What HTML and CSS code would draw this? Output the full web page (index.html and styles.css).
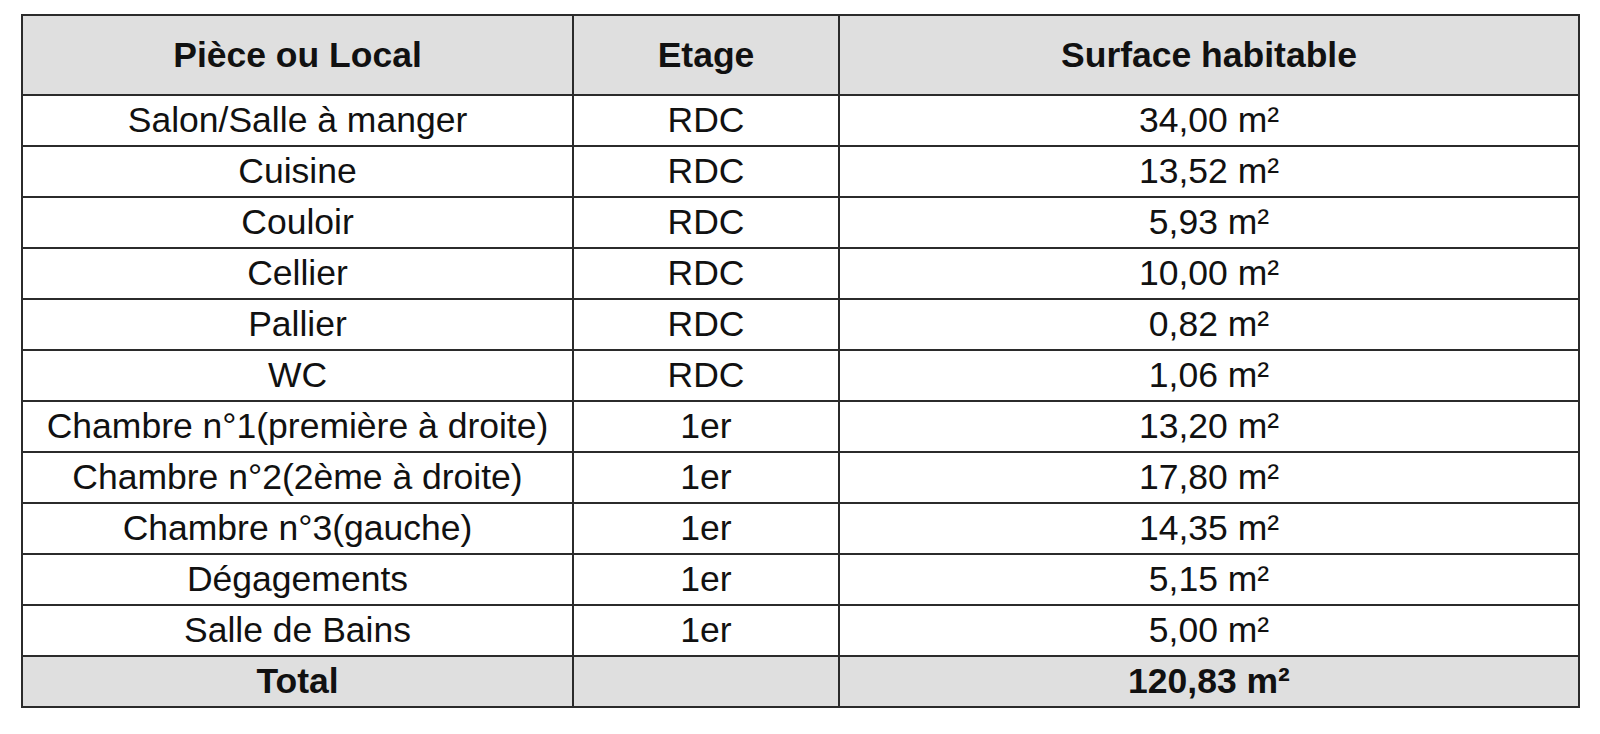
FILE: index.html
```html
<!DOCTYPE html>
<html lang="fr">
<head>
<meta charset="utf-8">
<title>Surfaces</title>
<link rel="stylesheet" href="styles.css">
</head>
<body>
<div class="table">
  <div class="cell head">Pièce ou Local</div>
  <div class="cell head">Etage</div>
  <div class="cell head">Surface habitable</div>

  <div class="cell">Salon/Salle à manger</div>
  <div class="cell">RDC</div>
  <div class="cell">34,00 m²</div>

  <div class="cell">Cuisine</div>
  <div class="cell">RDC</div>
  <div class="cell">13,52 m²</div>

  <div class="cell">Couloir</div>
  <div class="cell">RDC</div>
  <div class="cell">5,93 m²</div>

  <div class="cell">Cellier</div>
  <div class="cell">RDC</div>
  <div class="cell">10,00 m²</div>

  <div class="cell">Pallier</div>
  <div class="cell">RDC</div>
  <div class="cell">0,82 m²</div>

  <div class="cell">WC</div>
  <div class="cell">RDC</div>
  <div class="cell">1,06 m²</div>

  <div class="cell">Chambre n°1(première à droite)</div>
  <div class="cell">1er</div>
  <div class="cell">13,20 m²</div>

  <div class="cell">Chambre n°2(2ème à droite)</div>
  <div class="cell">1er</div>
  <div class="cell">17,80 m²</div>

  <div class="cell">Chambre n°3(gauche)</div>
  <div class="cell">1er</div>
  <div class="cell">14,35 m²</div>

  <div class="cell">Dégagements</div>
  <div class="cell">1er</div>
  <div class="cell">5,15 m²</div>

  <div class="cell">Salle de Bains</div>
  <div class="cell">1er</div>
  <div class="cell">5,00 m²</div>

  <div class="cell total">Total</div>
  <div class="cell total"></div>
  <div class="cell total">120,83 m²</div>
</div>
</body>
</html>
```

FILE: styles.css
```css
html, body {
  margin: 0;
  padding: 0;
  background: #ffffff;
}

body {
  font-family: "Liberation Sans", Arial, Helvetica, sans-serif;
  color: #111111;
}

.table {
  display: grid;
  grid-template-columns: 551px 266px 740px;
  grid-template-rows: 80px repeat(12, 51px);
  width: max-content;
  margin: 14px 0 0 21px;
  border-top: 2px solid #2b2b2b;
  border-left: 2px solid #2b2b2b;
}

.cell {
  box-sizing: border-box;
  display: flex;
  align-items: center;
  justify-content: center;
  border-right: 2px solid #2b2b2b;
  border-bottom: 2px solid #2b2b2b;
  font-size: 35.5px;
  white-space: nowrap;
}

.head,
.total {
  background: #dfdfdf;
  font-weight: bold;
}
```
